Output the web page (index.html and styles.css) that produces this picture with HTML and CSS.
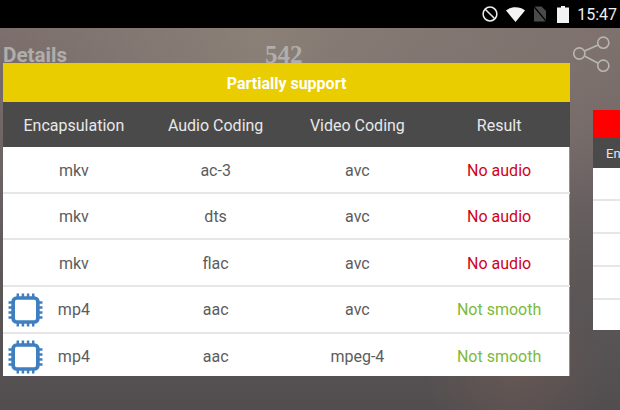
FILE: index.html
```html
<!DOCTYPE html>
<html lang="en">
<head>
  <meta charset="UTF-8">
  <title>Details</title>
  <link rel="stylesheet" href="styles.css">
</head>
<body>

  <!-- status bar -->
  <div class="status-bar">
    <svg class="st-icon" width="16" height="16" viewBox="0 0 16 16">
      <circle cx="8" cy="8" r="6.9" fill="none" stroke="#eee" stroke-width="1.5"/>
      <path d="M3.2 3.2L12.8 12.8" stroke="#eee" stroke-width="1.5"/>
    </svg>
    <svg class="st-icon" width="19" height="15" viewBox="0 0 19 15">
      <path d="M0 3.5C5 -0.9 14 -0.9 19 3.5L9.5 15Z" fill="#f4f4f4"/>
    </svg>
    <svg class="st-icon sim" width="14" height="16" viewBox="0 0 14 16">
      <path d="M1 0.5H8.5L13 5V15.5H1Z" fill="#4a4a4a"/>
      <path d="M0.5 0L13.8 16" stroke="#000" stroke-width="1.2"/>
    </svg>
    <svg class="st-icon" width="12" height="17" viewBox="0 0 12 17">
      <path d="M4 0H8V1.5H12V17H0V1.5H4Z" fill="#f2f2f2"/>
    </svg>
    <span class="clock">15:47</span>
  </div>

  <div class="page">
    <div class="top-row">
      <span class="top-title">Details</span>
      <span class="top-count">542</span>
      <svg class="share" width="38" height="38" viewBox="0 0 38 38">
        <g fill="none" stroke="#b9b5b3" stroke-width="1.6">
          <circle cx="6.3" cy="18.5" r="5.6"/>
          <circle cx="30.3" cy="7.7" r="5.6"/>
          <circle cx="30.3" cy="30.7" r="5.6"/>
          <path d="M11.4 16.1L25.2 9.9M11.4 21L25.2 28.2"/>
        </g>
      </svg>
    </div>

    <div class="cards">
      <div class="card">
        <div class="card-title yellow">Partially support</div>
        <div class="row head">
          <div>Encapsulation</div>
          <div>Audio Coding</div>
          <div>Video Coding</div>
          <div>Result</div>
        </div>
        <div class="body">
          <div class="row">
            <div>mkv</div><div>ac-3</div><div>avc</div><div class="bad">No audio</div>
          </div>
          <div class="row">
            <div>mkv</div><div>dts</div><div>avc</div><div class="bad">No audio</div>
          </div>
          <div class="row">
            <div>mkv</div><div>flac</div><div>avc</div><div class="bad">No audio</div>
          </div>
          <div class="row">
            <svg class="chip" viewBox="0 0 34 34" preserveAspectRatio="none"><use href="#chip"/></svg>
            <div>mp4</div><div>aac</div><div>avc</div><div class="ok">Not smooth</div>
          </div>
          <div class="row last">
            <svg class="chip" viewBox="0 0 34 34" preserveAspectRatio="none"><use href="#chip"/></svg>
            <div>mp4</div><div>aac</div><div>mpeg-4</div><div class="ok">Not smooth</div>
          </div>
        </div>
      </div>

      <!-- next card, cut off by the screen edge -->
      <div class="card small">
        <div class="card-title red"></div>
        <div class="row head">
          <div>Encapsulation</div>
        </div>
        <div class="row"></div>
        <div class="row"></div>
        <div class="row"></div>
        <div class="row"></div>
        <div class="row last"></div>
      </div>
    </div>
  </div>

  <svg width="0" height="0" class="defs">
    <defs>
      <g id="chip">
        <rect x="5" y="5" width="24" height="24" rx="3.5" fill="#fff" stroke="#3f7fbf" stroke-width="3.6"/>
        <path d="M9.5 0.5V4M14.5 0.5V4M19.5 0.5V4M24.5 0.5V4M9.5 30V33.5M14.5 30V33.5M19.5 30V33.5M24.5 30V33.5M0.5 9.5H4M0.5 14.5H4M0.5 19.5H4M0.5 24.5H4M30 9.5H33.5M30 14.5H33.5M30 19.5H33.5M30 24.5H33.5" stroke="#3f7fbf" stroke-width="2.4" fill="none"/>
      </g>
    </defs>
  </svg>

</body>
</html>
```

FILE: styles.css
```css
html, body {
  margin: 0;
  height: 100%;
  overflow: hidden;
}

body {
  font-family: Roboto, "Liberation Sans", sans-serif;
  color: #5c5c5c;
  background-color: #5e5756;
}

.defs {
  display: block;
  height: 0;
}

.status-bar {
  height: 28px;
  background: #000;
  display: flex;
  align-items: center;
  justify-content: flex-end;
  color: #eee;
  font-size: 16px;
  padding-right: 3px;
}

.st-icon {
  margin-right: 8px;
}

.sim {
  margin-right: 10px;
}

.page {
  height: 382px;
  overflow: hidden;
  background:
    radial-gradient(circle at 515px 340px, rgba(115, 92, 84, 0.55), transparent 90px),
    radial-gradient(circle at 260px 10px, rgba(140, 130, 120, 0.9), transparent 260px),
    radial-gradient(circle at 520px 20px, rgba(130, 118, 112, 0.8), transparent 170px),
    linear-gradient(180deg, #7c6f6d 0%, #6d6464 35%, #5d5758 65%, #524e50 100%);
}

.top-row {
  height: 35px;
  position: relative;
}

.top-title, .top-count {
  position: absolute;
  top: 15px;
  font-size: 20.6px;
  line-height: 24px;
  font-weight: bold;
  color: #b0aeac;
}

.top-title {
  left: 3px;
}

.top-count {
  left: 265px;
  font-family: "Liberation Serif", serif;
  font-size: 25px;
}

.share {
  position: absolute;
  left: 573px;
  top: 7px;
}

.cards {
  display: flex;
  align-items: flex-start;
  gap: 23px;
  padding-left: 3px;
}

.card {
  flex: none;
  width: 567px;
  background: #fff;
  position: relative;
}

.card-title {
  height: 39px;
  line-height: 41px;
  text-align: center;
  color: #fff;
  font-size: 16px;
  font-weight: bold;
}

.yellow {
  background: #eacd00;
}

.red {
  background: #ff0000;
}

.row {
  display: grid;
  grid-template-columns: repeat(4, 1fr);
  align-items: center;
  text-align: center;
  height: 43.27px;
  padding-top: 1.4px;
  font-size: 16px;
  border-bottom: 2px solid #e6e6e6;
  position: relative;
}

.row.last {
  height: 39.7px;
  padding-top: 3px;
  border-bottom: none;
}

.row.head {
  height: 44px;
  padding-top: 1px;
  background: #4a4a4a;
  color: #e8e8e8;
  border-bottom: none;
}

.body {
  box-shadow: inset -1px 0 0 #d0757a;
}

.bad {
  color: #d0021b;
}

.ok {
  color: #7cb93c;
}

.chip {
  position: absolute;
  left: 4.5px;
  top: 6px;
  width: 35px;
  height: 34px;
}

.small {
  width: 432px;
  margin-top: 47px;
}

.small .card-title {
  height: 28px;
}

.small .row {
  height: 31px;
  padding-top: 0;
  font-size: 13px;
}

.small .row.head {
  height: 30px;
}

.small .row.last {
  height: 30px;
}
```
